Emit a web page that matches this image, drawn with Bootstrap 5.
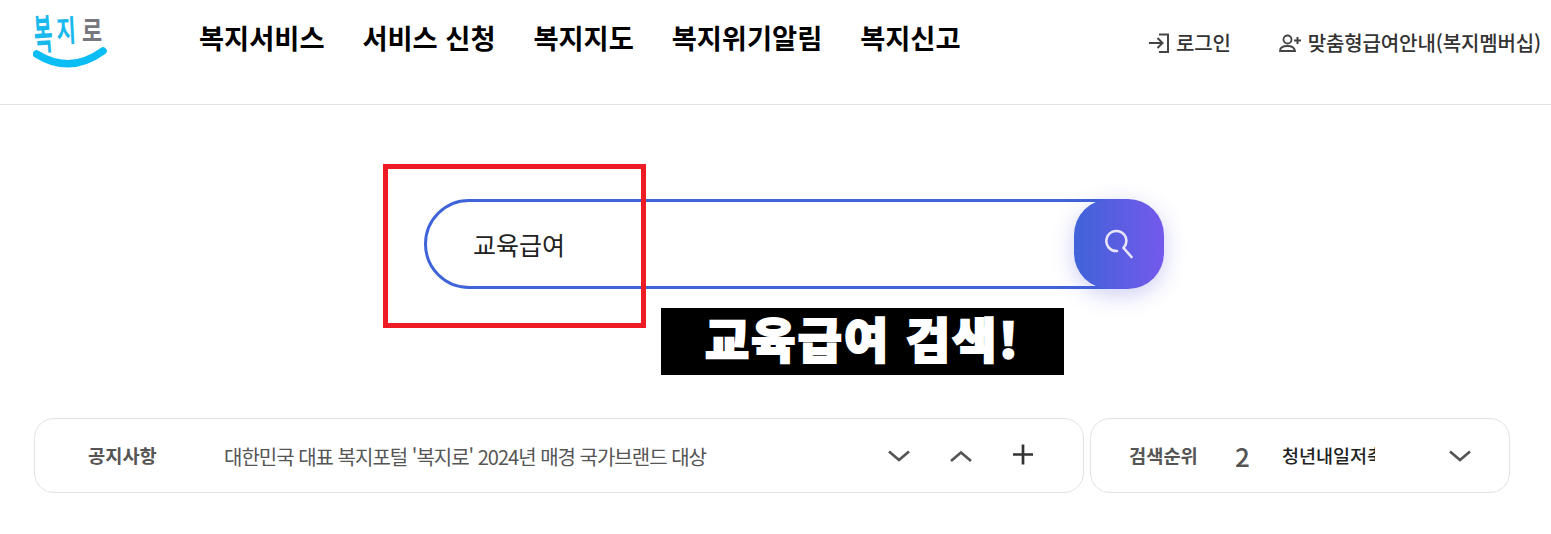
<!DOCTYPE html>
<html lang="ko">
<head>
<meta charset="utf-8">
<title>복지로</title>
<link href="https://cdn.jsdelivr.net/npm/bootstrap@5.3.0/dist/css/bootstrap.min.css" rel="stylesheet">
<style>
html,body{height:534px;overflow:hidden}
body{background:#fff;font-family:"Noto Sans CJK KR","Noto Sans",sans-serif;color:#222;position:relative}
.site-head{height:105px;border-bottom:1px solid #e2e2e2;padding-left:33px;padding-right:10px}
.logo-box{width:166px;height:72px;flex:none}
.main-menu{gap:37.8px;margin-top:-31px}
.main-menu a{font-size:27.3px;font-weight:700;color:#000;text-decoration:none;white-space:nowrap;line-height:36px}
.util-menu{margin-left:auto;margin-top:-19px;gap:48px}
.util-menu a{font-size:20px;color:#333;text-decoration:none;white-space:nowrap;display:flex;align-items:center;gap:7px;letter-spacing:-.13px;line-height:26px;font-weight:500}
.search-zone{margin:94px 0 0 424px;width:740px;height:90px;border:3px solid #3f63d8;border-radius:45px;position:relative}
.search-text{font-size:25px;line-height:84px;padding-left:46px;color:#222}
.search-go{position:absolute;top:-3px;right:-3px;width:90px;height:90px;border:0;border-radius:36px;background:linear-gradient(90deg,#3f63d8,#7559ec);box-shadow:0 6px 22px rgba(80,80,220,.28);padding:0}
.info-row{margin:129px 0 0 34px;gap:6px}
.info-card{height:75px;border:1px solid #e2e2e2;border-radius:20px;background:#fff}
.notice-card{width:1050px}
.rank-card{width:420px}
.info-title{font-size:18.7px;font-weight:700;color:#555;white-space:nowrap}
.notice-card .info-title{margin-left:53px;width:136px}
.notice-text{font-size:20px;letter-spacing:-1px;color:#555;white-space:nowrap;flex:1;padding-top:2px}
.ctrl-gap{gap:38px;margin-right:48px}
.rank-card .info-title{margin-left:38px;width:106px}
.rank-num{font-size:26px;font-weight:500;color:#555;width:47px;line-height:1}
.rank-text{font-size:18.5px;font-weight:500;color:#222;width:93px;overflow:hidden;white-space:nowrap}
.rank-card svg{margin-left:auto;margin-right:37px}
.mark-box{position:absolute;left:383px;top:164px;width:263px;height:164px;border:5px solid #ed1c24;pointer-events:none}
.caption-box{position:absolute;left:661px;top:308px;width:403px;height:67px;background:#000;color:#fff;font-size:48px;font-weight:900;line-height:59px;text-align:center;letter-spacing:2.2px;-webkit-text-stroke:2px #fff;white-space:nowrap}
</style>
</head>
<body>
<header class="site-head d-flex align-items-center">
  <a class="logo-box d-block align-self-start" href="#" aria-label="복지로">
    <svg width="76" height="72" viewBox="0 0 76 72">
      <g font-family="Noto Sans CJK KR, sans-serif" font-weight="700">
        <text font-size="22" fill="#19b9ee" transform="translate(2 50) rotate(-4) scale(.92 1.9)">복</text>
        <text font-size="24" fill="#19b9ee" transform="translate(24 42) rotate(-3) scale(.88 1.25)">지</text>
        <text font-size="22" fill="#77777f" transform="translate(49 41) scale(1 1.25)">로</text>
      </g>
      <path d="M3.500 54Q37 75 70 51" fill="none" stroke="#0abdf5" stroke-width="7.500" stroke-linecap="round"/>
    </svg>
  </a>
  <nav class="main-menu d-flex">
    <a href="#">복지서비스</a><a href="#">서비스 신청</a><a href="#">복지지도</a><a href="#">복지위기알림</a><a href="#">복지신고</a>
  </nav>
  <div class="util-menu d-flex">
    <a href="#"><svg width="20" height="20" viewBox="0 0 20 20" fill="none" stroke="#444" stroke-width="2"><path d="M0 10H13M8.500 5 13.500 10l-5 5"/><path d="M10 1.500H19V19H10"/></svg>로그인</a>
    <a href="#"><svg width="22" height="18" viewBox="0 0 22 18" fill="none" stroke="#444" stroke-width="1.800"><circle cx="8.500" cy="5.500" r="4"/><path d="M1 17c0-3.500 3-5 7.500-5s7 1.500 7.500 5z"/><path d="M15 6.500h7M18.500 3v7" stroke-width="2"/></svg>맞춤형급여안내(복지멤버십)</a>
  </div>
</header>
<main>
  <div class="search-zone">
    <div class="search-text">교육급여</div>
    <button class="search-go d-flex align-items-center justify-content-center" type="button" aria-label="검색">
      <svg width="28" height="30" viewBox="0 0 28 30" fill="none" stroke="#e9e6fb" stroke-width="2.600" stroke-linecap="round"><path d="M12 22A10 10 0 1 1 18.500 19"/><path d="M19.500 20 26.500 28"/></svg>
    </button>
  </div>
  <div class="info-row d-flex">
    <section class="info-card notice-card d-flex align-items-center">
      <div class="info-title">공지사항</div>
      <div class="notice-text">대한민국 대표 복지포털 '복지로' 2024년 매경 국가브랜드 대상</div>
      <div class="ctrl-gap d-flex align-items-center">
        <svg width="24" height="24" viewBox="0 0 24 24" fill="none" stroke="#555" stroke-width="2.700"><path d="M2 7.500 12 16 22 7.500"/></svg>
        <svg width="24" height="24" viewBox="0 0 24 24" fill="none" stroke="#555" stroke-width="2.700"><path d="M2 17 12 8.500 22 17"/></svg>
        <svg width="24" height="24" viewBox="0 0 24 24" fill="none" stroke="#333" stroke-width="2.700"><path d="M2 10.500H22M12 .5V20.500"/></svg>
      </div>
    </section>
    <section class="info-card rank-card d-flex align-items-center">
      <div class="info-title">검색순위</div>
      <div class="rank-num">2</div>
      <div class="rank-text">청년내일저축계좌</div>
      <svg width="24" height="24" viewBox="0 0 24 24" fill="none" stroke="#555" stroke-width="2.700"><path d="M2 7.500 12 16 22 7.500"/></svg>
    </section>
  </div>
</main>
<div class="mark-box"></div>
<div class="caption-box">교육급여 검색!</div>
<script src="https://cdn.jsdelivr.net/npm/bootstrap@5.3.0/dist/js/bootstrap.bundle.min.js"></script>
</body>
</html>
